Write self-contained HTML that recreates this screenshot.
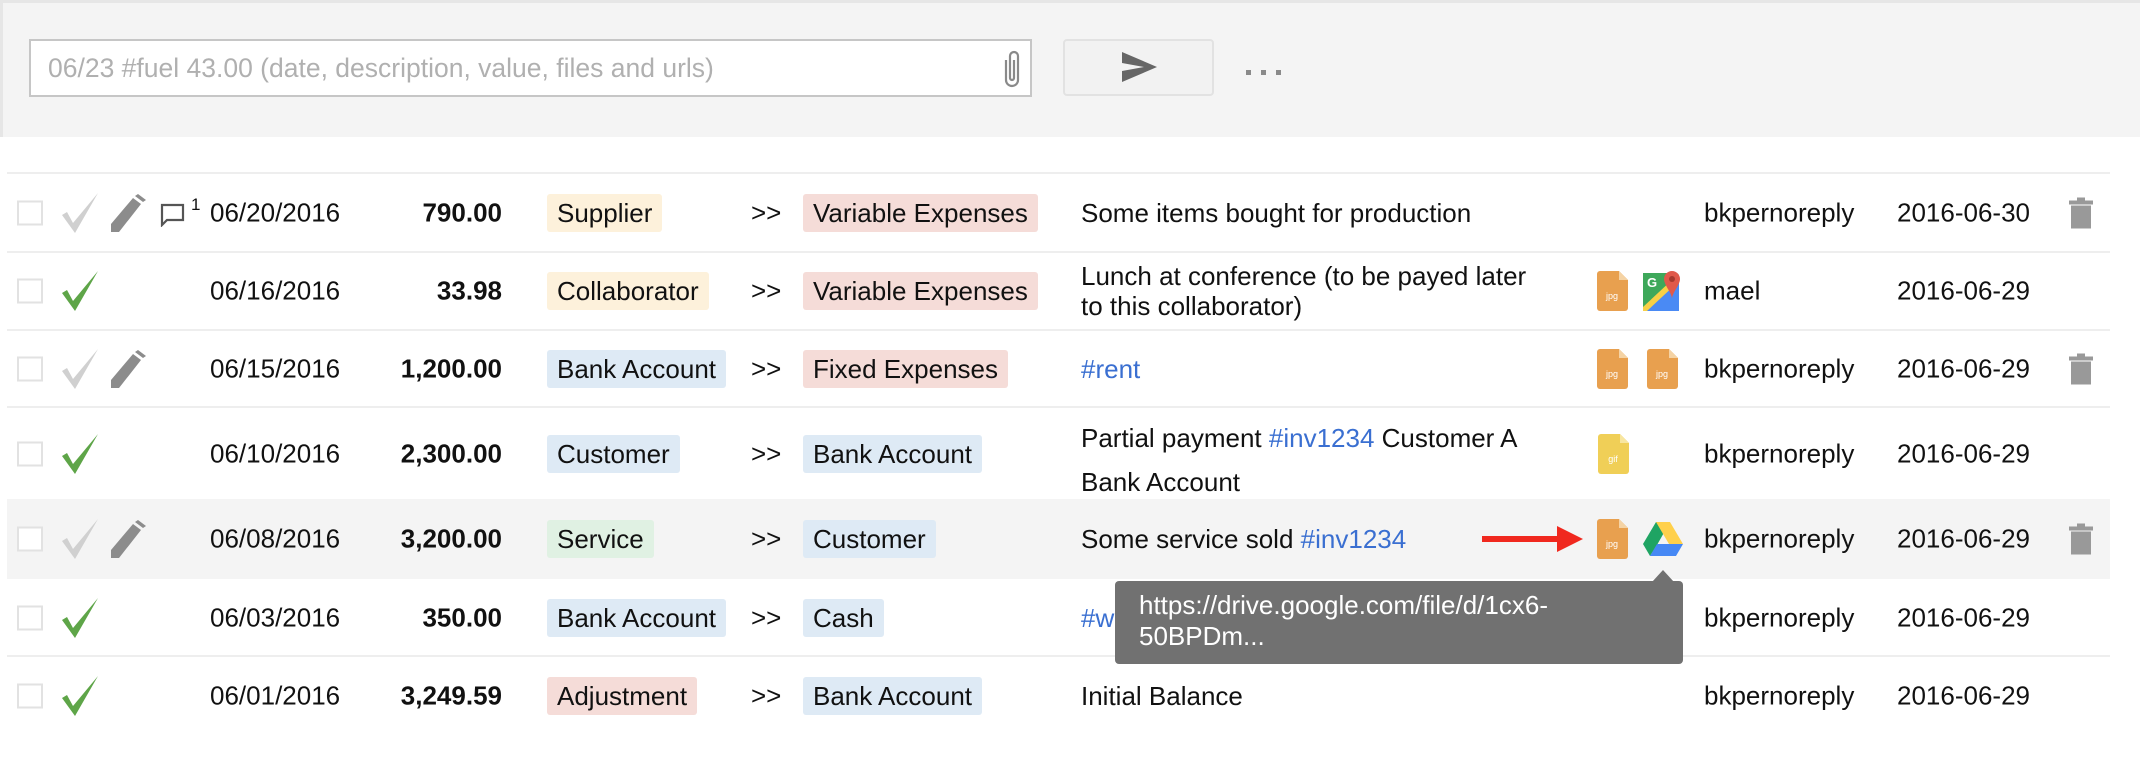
<!DOCTYPE html>
<html><head><meta charset="utf-8"><style>
*{margin:0;padding:0;box-sizing:border-box}
body{width:2140px;height:778px;background:#fff;font-family:"Liberation Sans",Arial,sans-serif;font-size:26px;color:#111;position:relative;overflow:hidden}
.a{position:absolute}
.top{left:0;top:0;width:2140px;height:137px;background:#f4f4f4;border-top:3px solid #e6e6e6;border-left:3px solid #e6e6e6}
.inp{left:29px;top:39px;width:1003px;height:58px;background:#fff;border:2px solid #c6c6c6;color:#b0b0b0;padding-left:17px;line-height:54px;font-size:26.5px}
.btn{left:1063px;top:39px;width:151px;height:57px;background:#f2f2f2;border:2px solid #e2e2e2;border-radius:4px}
.dot{width:5px;height:5px;background:#8a8a8a;top:70px}
.sep{left:7px;width:2103px;height:2px;background:#eeeeee}
.row{left:7px;width:2103px}
.c{position:absolute;top:50%;transform:translateY(-50%);white-space:nowrap}
.cb{left:10px;width:26px;height:25px;border:2px solid #e2e2e2;background:#fff}
.dt{left:203px}
.am{right:1608px;font-weight:bold;text-align:right}
.tag{padding:0 10px;height:38px;line-height:38px;border-radius:3px}
.y{background:#fdf1db}.r{background:#f5dcd8}.b{background:#deeaf5}.g{background:#e0f1e3}
.t1{left:540px}.gt{left:744px}.t2{left:796px}
.ds{left:1074px;line-height:30px}
.lk{color:#3a6fd1}
.us{left:1697px}.d2{left:1890px}
.tr{left:2062px}
.f{width:31px;height:40px}
</style></head><body>
<div class="a top"></div>
<div class="a inp">06/23 #fuel 43.00 (date, description, value, files and urls)</div>
<svg class="a" style="left:1001px;top:48px" width="22" height="42" viewBox="0 0 22 42"><path d="M5 12 V32 a6 6 0 0 0 12 0 V8 a4 4 0 0 0 -8 0 V30 a2 2 0 0 0 4 0 V12" fill="none" stroke="#8a8a8a" stroke-width="2.2"/></svg>
<div class="a btn"></div>
<svg class="a" style="left:1122px;top:52px" width="36" height="30" viewBox="0 0 36 30"><path d="M0 0 L35 15 L0 30 L0 19 L22 15 L0 11 Z" fill="#666"/></svg>
<div class="a dot" style="left:1246px"></div><div class="a dot" style="left:1261px"></div><div class="a dot" style="left:1276px"></div>

<div class="a sep" style="top:172px"></div>
<div class="a sep" style="top:251px"></div>
<div class="a sep" style="top:329px"></div>
<div class="a sep" style="top:406px"></div>
<div class="a" style="left:7px;top:499px;width:2103px;height:80px;background:#f4f4f4"></div>
<div class="a sep" style="top:655px"></div>

<!-- row1 -->
<div class="a row" style="top:174px;height:77px">
<div class="c cb"></div>
<svg class="c" style="left:55px" width="38" height="40" viewBox="0 0 38 40"><path d="M0 22 L5 19 L11 30 L36 0 L13 40 Z" fill="#d0d0d0"/></svg>
<svg class="c" style="left:104px" width="36" height="38" viewBox="0 0 36 38"><path d="M0 38 L0 30 L22 4 L30 10 L8 38 Z M24 2 L27 0 L35 6 L32 8 Z" fill="#8c8c8c"/></svg>
<svg class="c" style="left:153px;margin-top:2px" width="25" height="24" viewBox="0 0 25 24"><path d="M2 2 H23 V17 H7 L2 22 Z" fill="none" stroke="#555" stroke-width="2.2"/></svg>
<div class="c" style="left:184px;font-size:17px;margin-top:-8px">1</div>
<div class="c dt">06/20/2016</div>
<div class="c am">790.00</div>
<div class="c tag y t1">Supplier</div>
<div class="c gt">&gt;&gt;</div>
<div class="c tag r t2">Variable Expenses</div>
<div class="c ds">Some items bought for production</div>
<div class="c us">bkpernoreply</div>
<div class="c d2">2016-06-30</div>
<svg class="c tr" width="24" height="31" viewBox="0 0 24 31"><rect x="8" y="0" width="8" height="3" fill="#999"/><rect x="0" y="3" width="24" height="4" fill="#999"/><rect x="2" y="8" width="20" height="23" fill="#999"/></svg>
</div>

<!-- row2 -->
<div class="a row" style="top:253px;height:76px">
<div class="c cb"></div>
<svg class="c" style="left:55px" width="38" height="40" viewBox="0 0 38 40"><path d="M0 22 L5 19 L11 30 L36 0 L13 40 Z" fill="#5ea548"/></svg>
<div class="c dt">06/16/2016</div>
<div class="c am">33.98</div>
<div class="c tag y t1">Collaborator</div>
<div class="c gt">&gt;&gt;</div>
<div class="c tag r t2">Variable Expenses</div>
<div class="c ds">Lunch at conference (to be payed later<br>to this collaborator)</div>
<svg class="c f" style="left:1590px" viewBox="0 0 31 40"><path d="M3 0 H22 L31 9 V37 a3 3 0 0 1 -3 3 H3 a3 3 0 0 1 -3 -3 V3 a3 3 0 0 1 3 -3Z" fill="#e8a04f"/><path d="M22 0 V9 H31Z" fill="#f5d3a4"/><text x="15" y="28" font-size="9" fill="#fff" text-anchor="middle" font-family="Liberation Sans">jpg</text></svg>
<svg class="c" style="left:1636px" width="38" height="40" viewBox="0 0 38 40"><rect x="0" y="2" width="36" height="38" rx="3" fill="#3ea85a"/><path d="M0 40 L36 10 V40Z" fill="#4a8af4"/><path d="M0 36 L30 8 L34 12 L4 40 H0Z" fill="#f7d046"/><path d="M0 2 H22 L0 22Z" fill="#3ea85a"/><text x="4" y="16" font-size="13" font-weight="bold" fill="#fff" font-family="Liberation Sans">G</text><path d="M29 0 a8 8 0 0 1 8 8 c0 6 -8 14 -8 20 c0 -6 -8 -14 -8 -20 a8 8 0 0 1 8 -8Z" fill="#e0594a"/><circle cx="29" cy="8" r="3" fill="#a63a2e"/></svg>
<div class="c us">mael</div>
<div class="c d2">2016-06-29</div>
</div>

<!-- row3 -->
<div class="a row" style="top:331px;height:75px">
<div class="c cb"></div>
<svg class="c" style="left:55px" width="38" height="40" viewBox="0 0 38 40"><path d="M0 22 L5 19 L11 30 L36 0 L13 40 Z" fill="#d0d0d0"/></svg>
<svg class="c" style="left:104px" width="36" height="38" viewBox="0 0 36 38"><path d="M0 38 L0 30 L22 4 L30 10 L8 38 Z M24 2 L27 0 L35 6 L32 8 Z" fill="#8c8c8c"/></svg>
<div class="c dt">06/15/2016</div>
<div class="c am">1,200.00</div>
<div class="c tag b t1">Bank Account</div>
<div class="c gt">&gt;&gt;</div>
<div class="c tag r t2">Fixed Expenses</div>
<div class="c ds lk">#rent</div>
<svg class="c f" style="left:1590px" viewBox="0 0 31 40"><path d="M3 0 H22 L31 9 V37 a3 3 0 0 1 -3 3 H3 a3 3 0 0 1 -3 -3 V3 a3 3 0 0 1 3 -3Z" fill="#e8a04f"/><path d="M22 0 V9 H31Z" fill="#f5d3a4"/><text x="15" y="28" font-size="9" fill="#fff" text-anchor="middle" font-family="Liberation Sans">jpg</text></svg>
<svg class="c f" style="left:1640px" viewBox="0 0 31 40"><path d="M3 0 H22 L31 9 V37 a3 3 0 0 1 -3 3 H3 a3 3 0 0 1 -3 -3 V3 a3 3 0 0 1 3 -3Z" fill="#e8a04f"/><path d="M22 0 V9 H31Z" fill="#f5d3a4"/><text x="15" y="28" font-size="9" fill="#fff" text-anchor="middle" font-family="Liberation Sans">jpg</text></svg>
<div class="c us">bkpernoreply</div>
<div class="c d2">2016-06-29</div>
<svg class="c tr" width="24" height="31" viewBox="0 0 24 31"><rect x="8" y="0" width="8" height="3" fill="#999"/><rect x="0" y="3" width="24" height="4" fill="#999"/><rect x="2" y="8" width="20" height="23" fill="#999"/></svg>
</div>

<!-- row4 -->
<div class="a row" style="top:408px;height:91px">
<div class="c cb"></div>
<svg class="c" style="left:55px" width="38" height="40" viewBox="0 0 38 40"><path d="M0 22 L5 19 L11 30 L36 0 L13 40 Z" fill="#5ea548"/></svg>
<div class="c dt">06/10/2016</div>
<div class="c am">2,300.00</div>
<div class="c tag b t1">Customer</div>
<div class="c gt">&gt;&gt;</div>
<div class="c tag b t2">Bank Account</div>
<div class="c ds" style="line-height:44px;margin-top:6px">Partial payment <span class="lk">#inv1234</span> Customer A<br>Bank Account</div>
<svg class="c f" style="left:1591px" viewBox="0 0 31 40"><path d="M3 0 H22 L31 9 V37 a3 3 0 0 1 -3 3 H3 a3 3 0 0 1 -3 -3 V3 a3 3 0 0 1 3 -3Z" fill="#f0cf57"/><path d="M22 0 V9 H31Z" fill="#f8e6a0"/><text x="15" y="28" font-size="9" fill="#fff" text-anchor="middle" font-family="Liberation Sans">gif</text></svg>
<div class="c us">bkpernoreply</div>
<div class="c d2">2016-06-29</div>
</div>

<!-- row5 -->
<div class="a row" style="top:499px;height:80px">
<div class="c cb"></div>
<svg class="c" style="left:55px" width="38" height="40" viewBox="0 0 38 40"><path d="M0 22 L5 19 L11 30 L36 0 L13 40 Z" fill="#d0d0d0"/></svg>
<svg class="c" style="left:104px" width="36" height="38" viewBox="0 0 36 38"><path d="M0 38 L0 30 L22 4 L30 10 L8 38 Z M24 2 L27 0 L35 6 L32 8 Z" fill="#8c8c8c"/></svg>
<div class="c dt">06/08/2016</div>
<div class="c am">3,200.00</div>
<div class="c tag g t1">Service</div>
<div class="c gt">&gt;&gt;</div>
<div class="c tag b t2">Customer</div>
<div class="c ds">Some service sold <span class="lk">#inv1234</span></div>
<svg class="c" style="left:1475px" width="101" height="26" viewBox="0 0 101 26"><rect x="0" y="10" width="78" height="6" fill="#f0281e"/><path d="M75 0 L101 13 L75 26Z" fill="#f0281e"/></svg>
<svg class="c f" style="left:1590px" viewBox="0 0 31 40"><path d="M3 0 H22 L31 9 V37 a3 3 0 0 1 -3 3 H3 a3 3 0 0 1 -3 -3 V3 a3 3 0 0 1 3 -3Z" fill="#e8a04f"/><path d="M22 0 V9 H31Z" fill="#f5d3a4"/><text x="15" y="28" font-size="9" fill="#fff" text-anchor="middle" font-family="Liberation Sans">jpg</text></svg>
<svg class="c" style="left:1636px" width="40" height="34" viewBox="0 0 40 34"><path d="M13 0 H27 L14 23 L7 34 L0 22Z" fill="#1fa463"/><path d="M13 0 H27 L40 22 H26Z" fill="#ffd04b"/><path d="M7 34 L14 22 H40 L33 34Z" fill="#4688f4"/></svg>
<div class="c us">bkpernoreply</div>
<div class="c d2">2016-06-29</div>
<svg class="c tr" width="24" height="31" viewBox="0 0 24 31"><rect x="8" y="0" width="8" height="3" fill="#999"/><rect x="0" y="3" width="24" height="4" fill="#999"/><rect x="2" y="8" width="20" height="23" fill="#999"/></svg>
</div>

<!-- row6 -->
<div class="a row" style="top:580px;height:75px">
<div class="c cb"></div>
<svg class="c" style="left:55px" width="38" height="40" viewBox="0 0 38 40"><path d="M0 22 L5 19 L11 30 L36 0 L13 40 Z" fill="#5ea548"/></svg>
<div class="c dt">06/03/2016</div>
<div class="c am">350.00</div>
<div class="c tag b t1">Bank Account</div>
<div class="c gt">&gt;&gt;</div>
<div class="c tag b t2">Cash</div>
<div class="c ds lk">#w</div>
<div class="c us">bkpernoreply</div>
<div class="c d2">2016-06-29</div>
</div>

<!-- row7 -->
<div class="a row" style="top:657px;height:77px">
<div class="c cb"></div>
<svg class="c" style="left:55px" width="38" height="40" viewBox="0 0 38 40"><path d="M0 22 L5 19 L11 30 L36 0 L13 40 Z" fill="#5ea548"/></svg>
<div class="c dt">06/01/2016</div>
<div class="c am">3,249.59</div>
<div class="c tag r t1">Adjustment</div>
<div class="c gt">&gt;&gt;</div>
<div class="c tag b t2">Bank Account</div>
<div class="c ds">Initial Balance</div>
<div class="c us">bkpernoreply</div>
<div class="c d2">2016-06-29</div>
</div>

<!-- tooltip -->
<svg class="a" style="left:1652px;top:570px" width="22" height="12" viewBox="0 0 22 12"><path d="M0 12 L11 0 L22 12Z" fill="#717171"/></svg>
<div class="a" style="left:1115px;top:581px;width:568px;height:83px;background:#717171;border-radius:4px;color:#fff;padding:9px 0 0 24px;line-height:31px">https://drive.google.com/file/d/1cx6-<br>50BPDm...</div>
</body></html>
